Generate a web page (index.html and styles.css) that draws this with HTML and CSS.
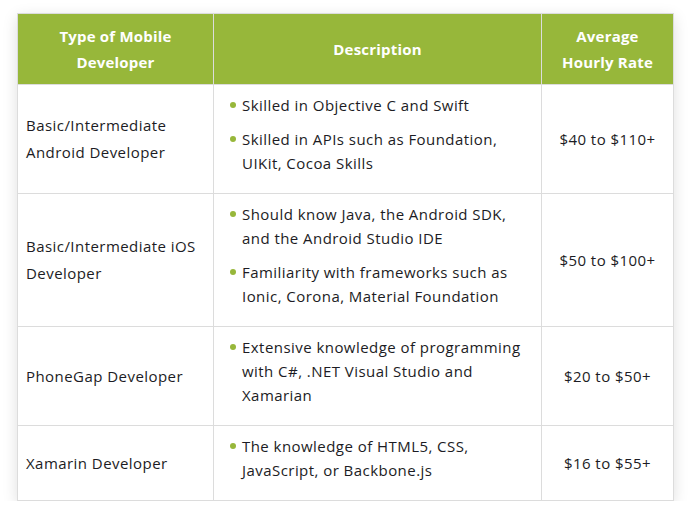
FILE: index.html
```html
<!DOCTYPE html>
<html lang="en">
<head>
<meta charset="utf-8">
<link rel="stylesheet" href="styles.css">
</head>
<body>
<div class="wrap">
<table class="rates">
  <colgroup>
    <col class="c1"><col class="c2"><col class="c3">
  </colgroup>
  <thead>
    <tr>
      <th>Type of Mobile Developer</th>
      <th>Description</th>
      <th>Average Hourly Rate</th>
    </tr>
  </thead>
  <tbody>
    <tr>
      <td class="type">Basic/Intermediate Android Developer</td>
      <td class="desc"><ul>
        <li>Skilled in Objective C and Swift</li>
        <li>Skilled in APIs such as Foundation, UIKit, Cocoa Skills</li>
      </ul></td>
      <td class="rate">$40 to $110+</td>
    </tr>
    <tr>
      <td class="type">Basic/Intermediate iOS Developer</td>
      <td class="desc"><ul>
        <li>Should know Java, the Android SDK, and the Android Studio IDE</li>
        <li>Familiarity with frameworks such as Ionic, Corona, Material Foundation</li>
      </ul></td>
      <td class="rate">$50 to $100+</td>
    </tr>
    <tr>
      <td class="type">PhoneGap Developer</td>
      <td class="desc"><ul>
        <li>Extensive knowledge of programming with C#, .NET Visual Studio and Xamarian</li>
      </ul></td>
      <td class="rate">$20 to $50+</td>
    </tr>
    <tr>
      <td class="type">Xamarin Developer</td>
      <td class="desc"><ul>
        <li>The knowledge of HTML5, CSS, JavaScript, or Backbone.js</li>
      </ul></td>
      <td class="rate">$16 to $55+</td>
    </tr>
  </tbody>
</table>
</div>
</body>
</html>
```
FILE: styles.css
```css
html, body {
  margin: 0;
  background: #ffffff;
}
body {
  font-family: "Open Sans", "Liberation Sans", sans-serif;
  color: #1c1c24;
}
.wrap {
  padding: 13px 0 0 17px;
}
.rates {
  border-collapse: collapse;
  table-layout: fixed;
  width: 656px;
  box-shadow: 0 4px 14px rgba(0, 0, 0, 0.13);
  background: #fff;
}
.c1 { width: 196px; }
.c2 { width: 328px; }
.c3 { width: 132px; }
.rates th, .rates td {
  border: 1px solid #dcdcdc;
}
.rates th {
  background: #97b73a;
  color: #fff;
  font-weight: 700;
  font-size: 15px;
  letter-spacing: 0.2px;
  line-height: 26px;
  padding: 9px 20px;
  text-align: center;
}
.rates td {
  font-size: 15px;
  letter-spacing: 0.45px;
  padding: 8px 8px;
  vertical-align: middle;
}
.type {
  line-height: 27px;
}
.rate {
  text-align: center;
  line-height: 24px;
}
.desc {
  line-height: 24px;
}
.desc ul {
  list-style: none;
  margin: 0;
  padding: 0 4px 0 20px;
}
.desc li {
  position: relative;
  margin-bottom: 10px;
}
.desc li::before {
  content: "";
  position: absolute;
  left: -12px;
  top: 9px;
  width: 6px;
  height: 6px;
  border-radius: 50%;
  background: #97b73a;
}
```
